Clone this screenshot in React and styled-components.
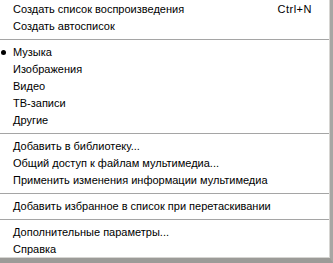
import React from "react";
import styled, { createGlobalStyle } from "styled-components";

const Global = createGlobalStyle`
  html, body { margin: 0; padding: 0; background: #ffffff; }
  body { font-family: Tahoma, "Liberation Sans", Arial, sans-serif; }
`;

const Menu = styled.div`
  box-sizing: border-box;
  width: 333px;
  height: 263px;
  background: #ffffff;
  padding-top: 1px;
  border-right: 3px solid #a7a6a3;
  border-bottom: 5px solid #9c9b98;
  box-shadow: inset -1px -1px 0 #d6d5d2;
  display: flex;
  flex-direction: column;
  font-family: Tahoma, "Liberation Sans", Arial, sans-serif;
  font-size: 11px;
  color: #000000;
  overflow: hidden;
`;

const Item = styled.div`
  height: 17px;
  display: grid;
  grid-template-columns: 13px 1fr auto;
  align-items: center;
  white-space: nowrap;
  cursor: default;
`;

const Check = styled.span`
  display: flex;
  align-items: center;
  padding-left: 1px;
`;

const Dot = styled.span`
  width: 5px;
  height: 5px;
  border-radius: 50%;
  background: #000000;
`;

const Label = styled.span`
  line-height: 17px;
`;

const Shortcut = styled.span`
  padding-right: 18px;
  line-height: 17px;
  letter-spacing: 0.5px;
`;

const Separator = styled.div`
  height: 9px;
  display: flex;
  align-items: center;
  padding-right: 1px;
  &::after {
    content: "";
    flex: 1;
    height: 1px;
    background: #a5a5a5;
  }
`;

const groups = [
  [
    { label: "Создать список воспроизведения", shortcut: "Ctrl+N" },
    { label: "Создать автосписок" },
  ],
  [
    { label: "Музыка", checked: true },
    { label: "Изображения" },
    { label: "Видео" },
    { label: "ТВ-записи" },
    { label: "Другие" },
  ],
  [
    { label: "Добавить в библиотеку..." },
    { label: "Общий доступ к файлам мультимедиа..." },
    { label: "Применить изменения информации мультимедиа" },
  ],
  [{ label: "Добавить избранное в список при перетаскивании" }],
  [{ label: "Дополнительные параметры..." }, { label: "Справка" }],
];

export default function App() {
  return (
    <>
      <Global />
      <Menu>
        {groups.map((g, gi) => (
          <React.Fragment key={gi}>
            {gi > 0 && <Separator />}
            {g.map((it) => (
              <Item key={it.label}>
                <Check>{it.checked && <Dot />}</Check>
                <Label>{it.label}</Label>
                <Shortcut>{it.shortcut || ""}</Shortcut>
              </Item>
            ))}
          </React.Fragment>
        ))}
      </Menu>
    </>
  );
}
